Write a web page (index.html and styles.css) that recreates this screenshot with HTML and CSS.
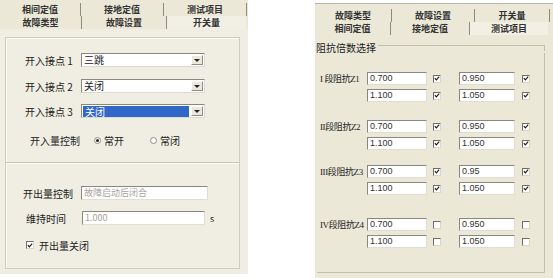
FILE: index.html
```html
<!DOCTYPE html>
<html lang="zh-CN">
<head>
<meta charset="UTF-8">
<title>开关量 / 测试项目</title>
<link rel="stylesheet" href="styles.css">
</head>
<body>

<div class="screen">

<div class="panel panel-left">
    <div class="tabs">
        <div class="tab-row row-a">
            <div class="tab">相间定值</div>
            <div class="tab">接地定值</div>
            <div class="tab">测试项目</div>
        </div>
        <div class="tab-row row-b">
            <div class="tab">故障类型</div>
            <div class="tab">故障设置</div>
            <div class="tab active">开关量</div>
        </div>
    </div>
    <div class="page">
        <div class="box">
            <div class="sec sec-in">
                <div class="field-row">
                    <span class="label">开入接点 1</span>
                    <div class="select"><span class="select-text">三跳</span><span class="select-btn"></span></div>
                </div>
                <div class="field-row">
                    <span class="label">开入接点 2</span>
                    <div class="select"><span class="select-text">关闭</span><span class="select-btn"></span></div>
                </div>
                <div class="field-row">
                    <span class="label">开入接点 3</span>
                    <div class="select"><span class="select-text hl">关闭</span><span class="select-btn"></span></div>
                </div>
                <div class="field-row radio-row">
                    <span class="label">开入量控制</span>
                    <span class="radio checked"></span><span class="opt">常开</span>
                    <span class="radio second"></span><span class="opt">常闭</span>
                </div>
            </div>
            <div class="sec sec-out">
                <div class="field-row">
                    <span class="label label-out">开出量控制</span>
                    <div class="textbox wide">故障启动后闭合</div>
                </div>
                <div class="field-row">
                    <span class="label">维持时间</span>
                    <div class="textbox narrow">1.000</div>
                    <span class="unit">s</span>
                </div>
                <div class="field-row check-row">
                    <span class="check checked"><svg width="7" height="7" viewBox="0 0 7 7"><path d="M1 3.2 L2.8 5.2 L6 1.4" fill="none" stroke="#222" stroke-width="1.4"/></svg></span>
                    <span class="opt">开出量关闭</span>
                </div>
            </div>
        </div>
    </div>
</div>

<div class="panel panel-right">
    <div class="tabs">
        <div class="tab-row row-a">
            <div class="tab">故障类型</div>
            <div class="tab">故障设置</div>
            <div class="tab">开关量</div>
        </div>
        <div class="tab-row row-b">
            <div class="tab">相间定值</div>
            <div class="tab">接地定值</div>
            <div class="tab active">测试项目</div>
        </div>
    </div>
    <div class="group">
        <div class="legend"><span>阻抗倍数选择</span><i></i></div>
        <div class="group-body">
            <div class="imp">
                <span class="imp-label">I 段阻抗Z1</span>
                <div class="num">0.700</div><span class="cb on"><svg width="7" height="7" viewBox="0 0 7 7"><path d="M1 3.2 L2.8 5.2 L6 1.4" fill="none" stroke="#222" stroke-width="1.4"/></svg></span>
                <div class="num second">0.950</div><span class="cb on"><svg width="7" height="7" viewBox="0 0 7 7"><path d="M1 3.2 L2.8 5.2 L6 1.4" fill="none" stroke="#222" stroke-width="1.4"/></svg></span>
                <span></span>
                <div class="num">1.100</div><span class="cb on"><svg width="7" height="7" viewBox="0 0 7 7"><path d="M1 3.2 L2.8 5.2 L6 1.4" fill="none" stroke="#222" stroke-width="1.4"/></svg></span>
                <div class="num second">1.050</div><span class="cb on"><svg width="7" height="7" viewBox="0 0 7 7"><path d="M1 3.2 L2.8 5.2 L6 1.4" fill="none" stroke="#222" stroke-width="1.4"/></svg></span>
            </div>
            <div class="imp">
                <span class="imp-label">II段阻抗Z2</span>
                <div class="num">0.700</div><span class="cb on"><svg width="7" height="7" viewBox="0 0 7 7"><path d="M1 3.2 L2.8 5.2 L6 1.4" fill="none" stroke="#222" stroke-width="1.4"/></svg></span>
                <div class="num second">0.950</div><span class="cb on"><svg width="7" height="7" viewBox="0 0 7 7"><path d="M1 3.2 L2.8 5.2 L6 1.4" fill="none" stroke="#222" stroke-width="1.4"/></svg></span>
                <span></span>
                <div class="num">1.100</div><span class="cb on"><svg width="7" height="7" viewBox="0 0 7 7"><path d="M1 3.2 L2.8 5.2 L6 1.4" fill="none" stroke="#222" stroke-width="1.4"/></svg></span>
                <div class="num second">1.050</div><span class="cb on"><svg width="7" height="7" viewBox="0 0 7 7"><path d="M1 3.2 L2.8 5.2 L6 1.4" fill="none" stroke="#222" stroke-width="1.4"/></svg></span>
            </div>
            <div class="imp">
                <span class="imp-label">III段阻抗Z3</span>
                <div class="num">0.700</div><span class="cb on"><svg width="7" height="7" viewBox="0 0 7 7"><path d="M1 3.2 L2.8 5.2 L6 1.4" fill="none" stroke="#222" stroke-width="1.4"/></svg></span>
                <div class="num second">0.95</div><span class="cb on"><svg width="7" height="7" viewBox="0 0 7 7"><path d="M1 3.2 L2.8 5.2 L6 1.4" fill="none" stroke="#222" stroke-width="1.4"/></svg></span>
                <span></span>
                <div class="num">1.100</div><span class="cb on"><svg width="7" height="7" viewBox="0 0 7 7"><path d="M1 3.2 L2.8 5.2 L6 1.4" fill="none" stroke="#222" stroke-width="1.4"/></svg></span>
                <div class="num second">1.050</div><span class="cb on"><svg width="7" height="7" viewBox="0 0 7 7"><path d="M1 3.2 L2.8 5.2 L6 1.4" fill="none" stroke="#222" stroke-width="1.4"/></svg></span>
            </div>
            <div class="imp">
                <span class="imp-label">IV段阻抗Z4</span>
                <div class="num">0.700</div><span class="cb"></span>
                <div class="num second">0.950</div><span class="cb"></span>
                <span></span>
                <div class="num">1.100</div><span class="cb"></span>
                <div class="num second">1.050</div><span class="cb"></span>
            </div>
        </div>
    </div>
</div>

</div>

</body>
</html>
```

FILE: styles.css
```css
html {
    box-sizing: border-box;
}

*, *:before, *:after {
    box-sizing: inherit;
}

body {
    margin: 0;
    background: #fff;
    color: #222;
    font: 11px "Noto Sans CJK SC", "Liberation Sans", sans-serif;
}

.screen {
    display: flex;
    align-items: flex-start;
}

.panel {
    background: #ebe8d8;
}

.panel-left {
    width: 248px;
    height: 274px;
}

.panel-right {
    width: 238px;
    height: 275px;
    margin-top: 3px;
    margin-left: 67px;
    border-top: 1px solid #b9b7aa;
}

/* tabs */

.tabs {
    padding-top: 3px;
}

.panel-right .tabs {
    padding-top: 5px;
}

.tab-row {
    display: flex;
    height: 13px;
}

.tab {
    text-align: center;
    line-height: 13px;
    font-size: 9px;
    font-weight: bold;
    color: #333;
    border-right: 1px solid #8d8b80;
}

.tab.active {
    background: #f2f0e4;
    border-right: 0;
}

.panel-left .row-a .tab:nth-child(1) { width: 81px; }
.panel-left .row-a .tab:nth-child(2) { width: 83px; }
.panel-left .row-a .tab:nth-child(3) { width: 83px; }
.panel-left .row-b .tab:nth-child(1) { width: 82px; }
.panel-left .row-b .tab:nth-child(2) { width: 85px; }
.panel-left .row-b .tab:nth-child(3) { width: 79px; }

.panel-right .row-a .tab:nth-child(1) { width: 77px; }
.panel-right .row-a .tab:nth-child(2) { width: 83px; }
.panel-right .row-a .tab:nth-child(3) { width: 75px; }
.panel-right .row-b .tab:nth-child(1) { width: 76px; }
.panel-right .row-b .tab:nth-child(2) { width: 79px; }
.panel-right .row-b .tab:nth-child(3) { width: 78px; }

/* left page */

.page {
    background: #f0eee2;
    height: 245px;
    padding: 8px 8px 5px 5px;
}

.box {
    height: 232px;
    border: 1px solid #cfccbc;
    box-shadow: inset 1px 1px 0 #fafaf5;
}

.sec-in {
    padding: 15px 0 15px 19px;
    border-bottom: 1px solid #c9c6b6;
}

.sec-out {
    padding: 22px 0 0 17px;
    border-top: 1px solid #fbfaf4;
}

.field-row {
    display: flex;
    align-items: center;
    height: 14px;
    margin-top: 12px;
}

.field-row:first-child {
    margin-top: 0;
}

.sec-in .field-row:nth-child(3) {
    margin-top: 11px;
}

.label {
    width: 56px;
    flex-shrink: 0;
    font-size: 10px;
    color: #222;
}

.radio-row {
    margin-top: 15px;
    padding-left: 5px;
}

.radio-row .label {
    width: 64px;
}

.select {
    display: flex;
    width: 124px;
    height: 14px;
    background: #fff;
    border: 1px solid;
    border-color: #8a887d #dcdad0 #dcdad0 #8a887d;
}

.select-text {
    flex: 1;
    padding-left: 2px;
    line-height: 12px;
    font-size: 10px;
}

.select-text.hl {
    background: #3167c6;
    color: #fff;
    margin: 1px 1px 0 1px;
    line-height: 11px;
}

.select-btn {
    width: 12px;
    margin: 1px;
    background: #eae8dc;
    border: 1px solid;
    border-color: #fff #8e8c82 #8e8c82 #fff;
    display: flex;
    align-items: center;
    justify-content: center;
}

.select-btn:after {
    content: "";
    border-left: 3px solid transparent;
    border-right: 3px solid transparent;
    border-top: 3px solid #222;
}

.radio {
    width: 7px;
    height: 7px;
    border-radius: 50%;
    border: 1px solid #8e8c82;
    background: #fff;
    margin-right: 3px;
    display: flex;
    align-items: center;
    justify-content: center;
}

.radio.checked:after {
    content: "";
    width: 3px;
    height: 3px;
    border-radius: 50%;
    background: #222;
}

.radio.second {
    margin-left: 26px;
}

.opt {
    font-size: 10px;
}

.sec-out .label {
    width: 58px;
    padding-left: 3px;
}

.sec-out .label-out {
    padding-left: 0;
}

.sec-out .field-row:nth-child(2) {
    margin-top: 11px;
}

.textbox {
    height: 14px;
    background: #fff;
    border: 1px solid;
    border-color: #8a887d #e0ded4 #e0ded4 #8a887d;
    color: #a6a49a;
    font-size: 9px;
    line-height: 12px;
    padding-left: 2px;
}

.textbox.wide {
    width: 127px;
}

.textbox.narrow {
    width: 123px;
    margin-left: 1px;
}

.unit {
    margin-left: 5px;
    font-size: 9px;
}

.check-row {
    margin-top: 13px;
    padding-left: 3px;
}

.check, .cb {
    width: 8px;
    height: 8px;
    background: #fff;
    border: 1px solid;
    border-color: #6f6d64 #d8d6cc #d8d6cc #6f6d64;
    display: flex;
    align-items: center;
    justify-content: center;
}

.check {
    margin-right: 5px;
}

/* right page */

.group {
    margin-right: 8px;
}

.legend {
    display: flex;
    align-items: center;
    height: 12px;
    margin-top: 6px;
    padding-left: 1px;
}

.legend span {
    font-size: 10px;
}

.legend i {
    flex: 1;
    border-top: 1px solid #c2bfae;
    margin: 1px 0 0 2px;
    height: 6px;
    border-right: 1px solid #c2bfae;
}

.group-body {
    height: 220px;
    border-right: 1px solid #c2bfae;
    border-bottom: 1px solid #c2bfae;
    margin-left: 2px;
    padding-top: 13px;
}

.imp {
    display: grid;
    grid-template-columns: 50px 60px 14px 74px 15px;
    grid-auto-rows: 13px;
    row-gap: 4px;
    align-items: center;
    margin-top: 18px;
}

.imp:first-child {
    margin-top: 6px;
}

.imp:nth-child(3) {
    margin-top: 15px;
}

.imp:nth-child(4) {
    margin-top: 23px;
}

.imp-label {
    font: 9px "Liberation Serif", "Noto Sans CJK SC", serif;
    letter-spacing: -0.4px;
    padding-left: 3px;
    white-space: nowrap;
}

.num {
    height: 13px;
    background: #fff;
    border: 1px solid;
    border-color: #8a887d #e0ded4 #e0ded4 #8a887d;
    font: 9px "Liberation Sans", sans-serif;
    line-height: 11px;
    padding-left: 2px;
    color: #333;
}

.num.second {
    width: 56px;
    margin-left: 18px;
}

.cb {
    justify-self: end;
}
```
